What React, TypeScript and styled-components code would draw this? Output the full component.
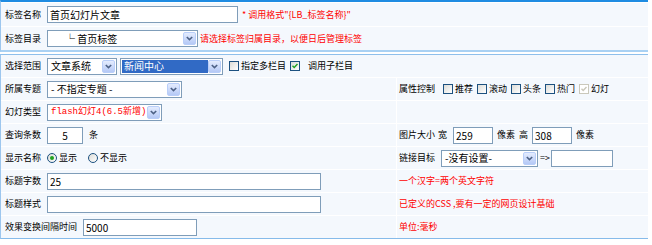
import React from 'react';
import styled, {createGlobalStyle, css} from 'styled-components';

const GlobalStyle = createGlobalStyle`
  body {
    margin: 0;
    background: #ffffff;
  }
`

const TextStyle = css`
  font-family: "Noto Sans CJK SC", "Liberation Sans", sans-serif;
  font-size: 9px;
  line-height: 12px;
  color: #000000;
`

const FieldFont = css`
  font-family: "Noto Sans CJK SC", "Liberation Sans", sans-serif;
  font-size: 10px;
`

const Page = styled.div`
  position: relative;
  width: 648px;
  ${TextStyle};
`

const TopTable = styled.div`
  display: flex;
  flex-direction: column;
  gap: 1px;
  border-top: 2px solid #1f8ce2;
  border-left: 1px solid #9cc6ee;
  border-bottom: 2px solid #a9d1f3;
  padding-top: 1px;
  margin-bottom: 2px;
  background: #ffffff;
`

const MainTable = styled.div`
  display: flex;
  flex-direction: column;
  gap: 1px;
  border-top: 1px solid #8ebfeb;
  border-left: 1px solid #9cc6ee;
  border-bottom: 1px solid #86bbea;
  background: #ffffff;
`

const Row = styled.div<{$h?: number}>`
  display: flex;
  align-items: center;
  height: ${p => p.$h || 22}px;
  padding-left: 4px;
  background: #f4f8fd;
  white-space: nowrap;
`

const SplitRow = styled.div`
  display: grid;
  grid-template-columns: 395px 1fr;
  column-gap: 1px;
  height: 22px;
`

const Cell = styled.div<{$right?: boolean}>`
  display: flex;
  align-items: center;
  padding-left: ${p => p.$right ? 2 : 4}px;
  background: #f4f8fd;
  white-space: nowrap;
`

const Label = styled.span`
  margin-right: 6px;
`

const Text = styled.span<{$ml?: number; $mr?: number}>`
  margin-left: ${p => p.$ml || 0}px;
  margin-right: ${p => p.$mr || 0}px;
`

const Hint = styled.span<{$ml?: number}>`
  color: #ff0000;
  margin-left: ${p => p.$ml || 0}px;
`

const TextInput = styled.input<{$w: number; $center?: boolean}>`
  ${FieldFont};
  width: ${p => p.$w}px;
  height: 17px;
  box-sizing: border-box;
  border: 1px solid #7f9db9;
  padding: 0 2px;
  margin: 0;
  background: #ffffff;
  color: #000000;
  text-align: ${p => p.$center ? 'center' : 'left'};
  outline: none;
`

const SelectBox = styled.div<{$w: number; $ml?: number}>`
  display: flex;
  width: ${p => p.$w}px;
  height: 17px;
  box-sizing: border-box;
  border: 1px solid #7f9db9;
  padding: 1px;
  margin-left: ${p => p.$ml || 0}px;
  background: #ffffff;
`

const SelectValue = styled.span<{$selected?: boolean; $red?: boolean; $indent?: number}>`
  ${FieldFont};
  flex: 1;
  display: flex;
  align-items: center;
  padding-left: ${p => p.$indent || 2}px;
  background: ${p => p.$selected ? '#316ac5' : 'transparent'};
  color: ${p => p.$selected ? '#ffffff' : p.$red ? '#ff0000' : '#000000'};
  font-family: ${p => p.$red ? '"Liberation Mono", "Noto Sans CJK SC", monospace' : '"Noto Sans CJK SC", "Liberation Sans", sans-serif'};
  font-size: ${p => p.$red ? 9 : 10}px;
  overflow: hidden;
`

const SelectArrow = styled.span`
  width: 13px;
  display: flex;
  align-items: center;
  justify-content: center;
  box-sizing: border-box;
  border: 1px solid #b9cef9;
  border-radius: 2px;
  background: linear-gradient(#e4ecfe, #b5c9f6);
`

const Box = styled.span<{$disabled?: boolean; $round?: boolean; $ml?: number}>`
  position: relative;
  display: inline-block;
  width: 10px;
  height: 10px;
  box-sizing: border-box;
  margin-left: ${p => p.$ml || 0}px;
  margin-right: 2px;
  border: 1px solid ${p => p.$disabled ? '#cac8bb' : '#1c5180'};
  border-radius: ${p => p.$round ? '50%' : '0'};
  background: ${p => p.$disabled ? '#ffffff' : 'linear-gradient(135deg, #dcdcd7, #ffffff)'};

  svg {
    position: absolute;
    left: 0;
    top: 0;
  }
`

const Dot = styled.span`
  position: absolute;
  left: 2px;
  top: 2px;
  width: 4px;
  height: 4px;
  border-radius: 50%;
  background: #21a121;
`

const Corner = styled.svg`
  position: absolute;
  right: -3px;
  bottom: -6px;
`

const Chevron = () => (
  <svg width="7" height="5" viewBox="0 0 7 5">
    <polyline points="0.8,1 3.5,3.6 6.2,1" fill="none" stroke="#4d6185" strokeWidth="1.6"/>
  </svg>
)

const Select = ({w, ml, selected, red, indent, children}: {w: number; ml?: number; selected?: boolean; red?: boolean; indent?: number; children: React.ReactNode}) => (
  <SelectBox $w={w} $ml={ml}>
    <SelectValue $selected={selected} $red={red} $indent={indent}>{children}</SelectValue>
    <SelectArrow><Chevron/></SelectArrow>
  </SelectBox>
)

const Check = ({checked, disabled, ml}: {checked?: boolean; disabled?: boolean; ml?: number}) => (
  <Box $disabled={disabled} $ml={ml}>
    {checked && (
      <svg width="8" height="8" viewBox="0 0 8 8">
        <polyline points="1.5,3.8 3.2,5.5 6.5,2" fill="none" stroke={disabled ? '#c9c7ba' : '#21a121'} strokeWidth="1.4"/>
      </svg>
    )}
  </Box>
)

const Radio = ({checked, ml}: {checked?: boolean; ml?: number}) => (
  <Box $round $ml={ml}>{checked && <Dot/>}</Box>
)

const flags = [
  {name: '推荐'},
  {name: '滚动'},
  {name: '头条'},
  {name: '热门'},
  {name: '幻灯', checked: true, disabled: true},
]

const App = () => {
  return (
    <Page>
      <GlobalStyle/>
      <TopTable>
        <Row $h={23}>
          <Label>标签名称</Label>
          <TextInput $w={191} readOnly value="首页幻灯片文章"/>
          <Hint $ml={4}>* 调用格式"{'{'}LB_标签名称{'}'}"</Hint>
        </Row>
        <Row $h={23}>
          <Label>标签目录</Label>
          <Select w={151} indent={16}>└ 首页标签</Select>
          <Hint $ml={2}>请选择标签归属目录，以便日后管理标签</Hint>
        </Row>
      </TopTable>
      <MainTable>
        <Row>
          <Label>选择范围</Label>
          <Select w={70}>文章系统</Select>
          <Select w={103} ml={3} selected>新闻中心</Select>
          <Check ml={6}/>
          <Text>指定多栏目</Text>
          <Check ml={4} checked/>
          <Text $ml={6}>调用子栏目</Text>
        </Row>
        <SplitRow>
          <Cell>
            <Label>所属专题</Label>
            <Select w={135}>- 不指定专题 -</Select>
          </Cell>
          <Cell $right>
            <Text $mr={8}>属性控制</Text>
            {flags.map(f => (
              <React.Fragment key={f.name}>
                <Check checked={f.checked} disabled={f.disabled}/>
                <Text $mr={4}>{f.name}</Text>
              </React.Fragment>
            ))}
          </Cell>
        </SplitRow>
        <SplitRow>
          <Cell>
            <Label>幻灯类型</Label>
            <Select w={115} red>flash幻灯4(6.5新增)</Select>
          </Cell>
          <Cell $right/>
        </SplitRow>
        <SplitRow>
          <Cell>
            <Label>查询条数</Label>
            <TextInput $w={36} $center readOnly value="5"/>
            <Text $ml={6}>条</Text>
          </Cell>
          <Cell $right>
            <Text $mr={3}>图片大小</Text>
            <Text $mr={6}>宽</Text>
            <TextInput $w={40} readOnly value="259"/>
            <Text $ml={4} $mr={4}>像素</Text>
            <Text $mr={4}>高</Text>
            <TextInput $w={40} readOnly value="308"/>
            <Text $ml={4}>像素</Text>
          </Cell>
        </SplitRow>
        <SplitRow>
          <Cell>
            <Label>显示名称</Label>
            <Radio checked/>
            <Text>显示</Text>
            <Radio ml={11}/>
            <Text>不显示</Text>
          </Cell>
          <Cell $right>
            <Label>链接目标</Label>
            <Select w={97}>-没有设置-</Select>
            <Text $ml={2} $mr={1}>=&gt;</Text>
            <TextInput $w={62} readOnly value=""/>
          </Cell>
        </SplitRow>
        <SplitRow>
          <Cell>
            <Label>标题字数</Label>
            <TextInput $w={274} readOnly value="25"/>
          </Cell>
          <Cell $right>
            <Hint>一个汉字=两个英文字符</Hint>
          </Cell>
        </SplitRow>
        <SplitRow>
          <Cell>
            <Label>标题样式</Label>
            <TextInput $w={274} readOnly value=""/>
          </Cell>
          <Cell $right>
            <Hint>已定义的CSS ,要有一定的网页设计基础</Hint>
          </Cell>
        </SplitRow>
        <SplitRow>
          <Cell>
            <Label>效果变换间隔时间</Label>
            <TextInput $w={114} readOnly value="5000"/>
          </Cell>
          <Cell $right>
            <Hint>单位:毫秒</Hint>
          </Cell>
        </SplitRow>
      </MainTable>
      <Corner width="5" height="5" viewBox="0 0 5 5">
        <path d="M2.5 0v5M0 2.5h5" stroke="#777777" strokeWidth="1.5"/>
      </Corner>
    </Page>
  );
};

export default App;
